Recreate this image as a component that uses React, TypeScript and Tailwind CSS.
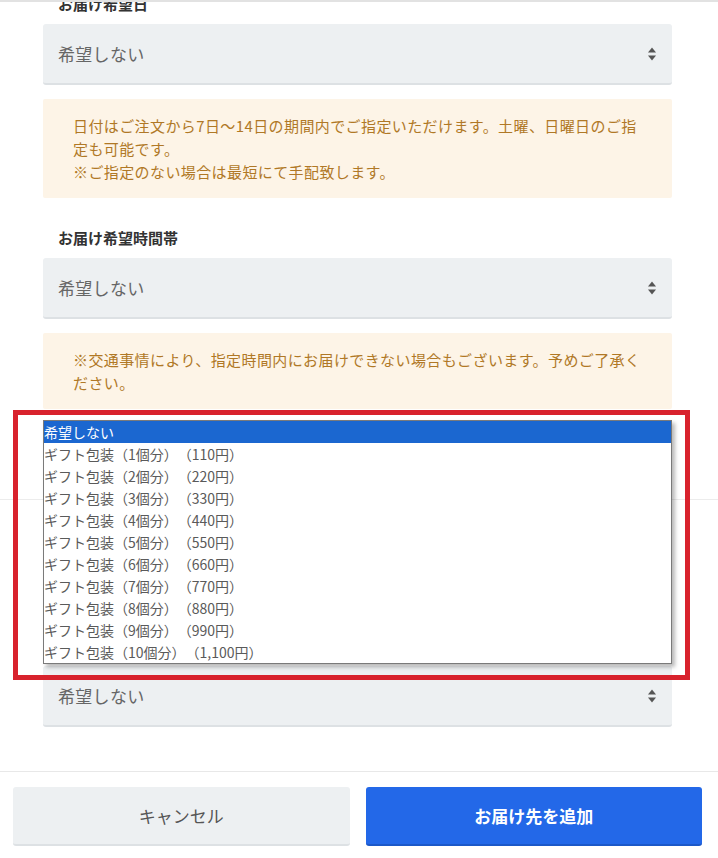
import type { ReactNode } from 'react'

const GIFT_OPTIONS = [
  '希望しない',
  'ギフト包装（1個分）（110円）',
  'ギフト包装（2個分）（220円）',
  'ギフト包装（3個分）（330円）',
  'ギフト包装（4個分）（440円）',
  'ギフト包装（5個分）（550円）',
  'ギフト包装（6個分）（660円）',
  'ギフト包装（7個分）（770円）',
  'ギフト包装（8個分）（880円）',
  'ギフト包装（9個分）（990円）',
  'ギフト包装（10個分）（1,100円）',
]

function Arrows() {
  return (
    <svg width="10" height="16" viewBox="0 0 10 16" className="shrink-0">
      <path d="M1 6.5 L5 1.5 L9 6.5 Z" fill="#555" />
      <path d="M1 9.5 L5 14.5 L9 9.5 Z" fill="#555" />
    </svg>
  )
}

function FakeSelect({ value }: { value: string }) {
  return (
    <div className="flex h-[61px] items-center justify-between rounded-[3px] border-b-2 border-[#dde1e4] bg-[#edf0f2] pr-[15px] pl-[15px] text-[17px] tracking-[0.3px] text-[#666]">
      <span>{value}</span>
      <Arrows />
    </div>
  )
}

function Label({ children, className = '' }: { children: ReactNode; className?: string }) {
  return (
    <p className={`pl-[15px] text-[15px] leading-[20px] font-bold text-[#333] ${className}`}>{children}</p>
  )
}

function Notice({ lines, className = '' }: { lines: string[]; className?: string }) {
  return (
    <div className={`rounded-[2px] bg-[#fdf4e7] px-[30px] py-[15px] text-[15px] leading-[23px] tracking-[0.4px] text-[#b07826] ${className}`}>
      {lines.map((l, i) => (
        <p key={i} className="whitespace-nowrap">
          {l}
        </p>
      ))}
    </div>
  )
}

export default function App() {
  return (
    <div className="flex h-[858px] w-full flex-col overflow-hidden bg-white font-['Noto_Sans_CJK_JP','Noto_Sans',sans-serif] [text-spacing-trim:space-all]">
      <div className="h-[2px] shrink-0 bg-[#e2e2e2]" />
      <div className="h-[769px] shrink-0 overflow-hidden">
        <div className="-mt-[8px] pr-[46px] pl-[43px]">
          <Label>お届け希望日</Label>
          <div className="mt-[10px]">
            <FakeSelect value="希望しない" />
          </div>
          <Notice
            className="mt-[14px]"
            lines={[
              '日付はご注文から7日～14日の期間内でご指定いただけます。土曜、日曜日のご指',
              '定も可能です。',
              '※ご指定のない場合は最短にて手配致します。',
            ]}
          />

          <Label className="mt-[30px]">お届け希望時間帯</Label>
          <div className="mt-[10px]">
            <FakeSelect value="希望しない" />
          </div>
          <Notice
            className="mt-[14px]"
            lines={['※交通事情により、指定時間内にお届けできない場合もございます。予めご了承く', 'ださい。']}
          />
        </div>

        {/* gift section: its heading and label sit under the open list */}
        <div className="mt-[90px] border-t border-[#ececec] pt-[166px] pr-[46px] pl-[43px]">
          <div className="relative">
            <FakeSelect value="希望しない" />

            <div className="absolute right-0 bottom-[calc(100%+2px)] left-0 border border-[#7a7a7a] bg-white shadow-[3px_3px_4px_rgba(0,0,0,0.28)]">
              {GIFT_OPTIONS.map((o, i) => (
                <div
                  key={o}
                  className={`h-[22px] text-[14px] leading-[22px] ${
                    i === 0 ? 'bg-[#1b67d0] text-white' : 'text-[#5a5a5a]'
                  }`}
                >
                  {o}
                </div>
              ))}
            </div>

            <div className="pointer-events-none absolute -top-[256px] -right-[18px] bottom-[47px] -left-[30px] border-[5px] border-[#d8222d]" />
          </div>
        </div>
      </div>

      <div className="flex shrink-0 gap-4 border-t border-[#e8e8e8] pt-[15px] pr-[16px] pb-[12px] pl-[13px]">
        <button
          type="button"
          className="flex h-[59px] flex-1 items-center justify-center rounded-[3px] border-b-2 border-[#dde1e4] bg-[#edf0f2] text-[17px] text-[#555]"
        >
          キャンセル
        </button>
        <button
          type="button"
          className="flex h-[59px] flex-1 items-center justify-center rounded-[3px] border-b-2 border-[#1c58c8] bg-[#2368e8] text-[17px] font-bold text-white"
        >
          お届け先を追加
        </button>
      </div>
    </div>
  )
}
